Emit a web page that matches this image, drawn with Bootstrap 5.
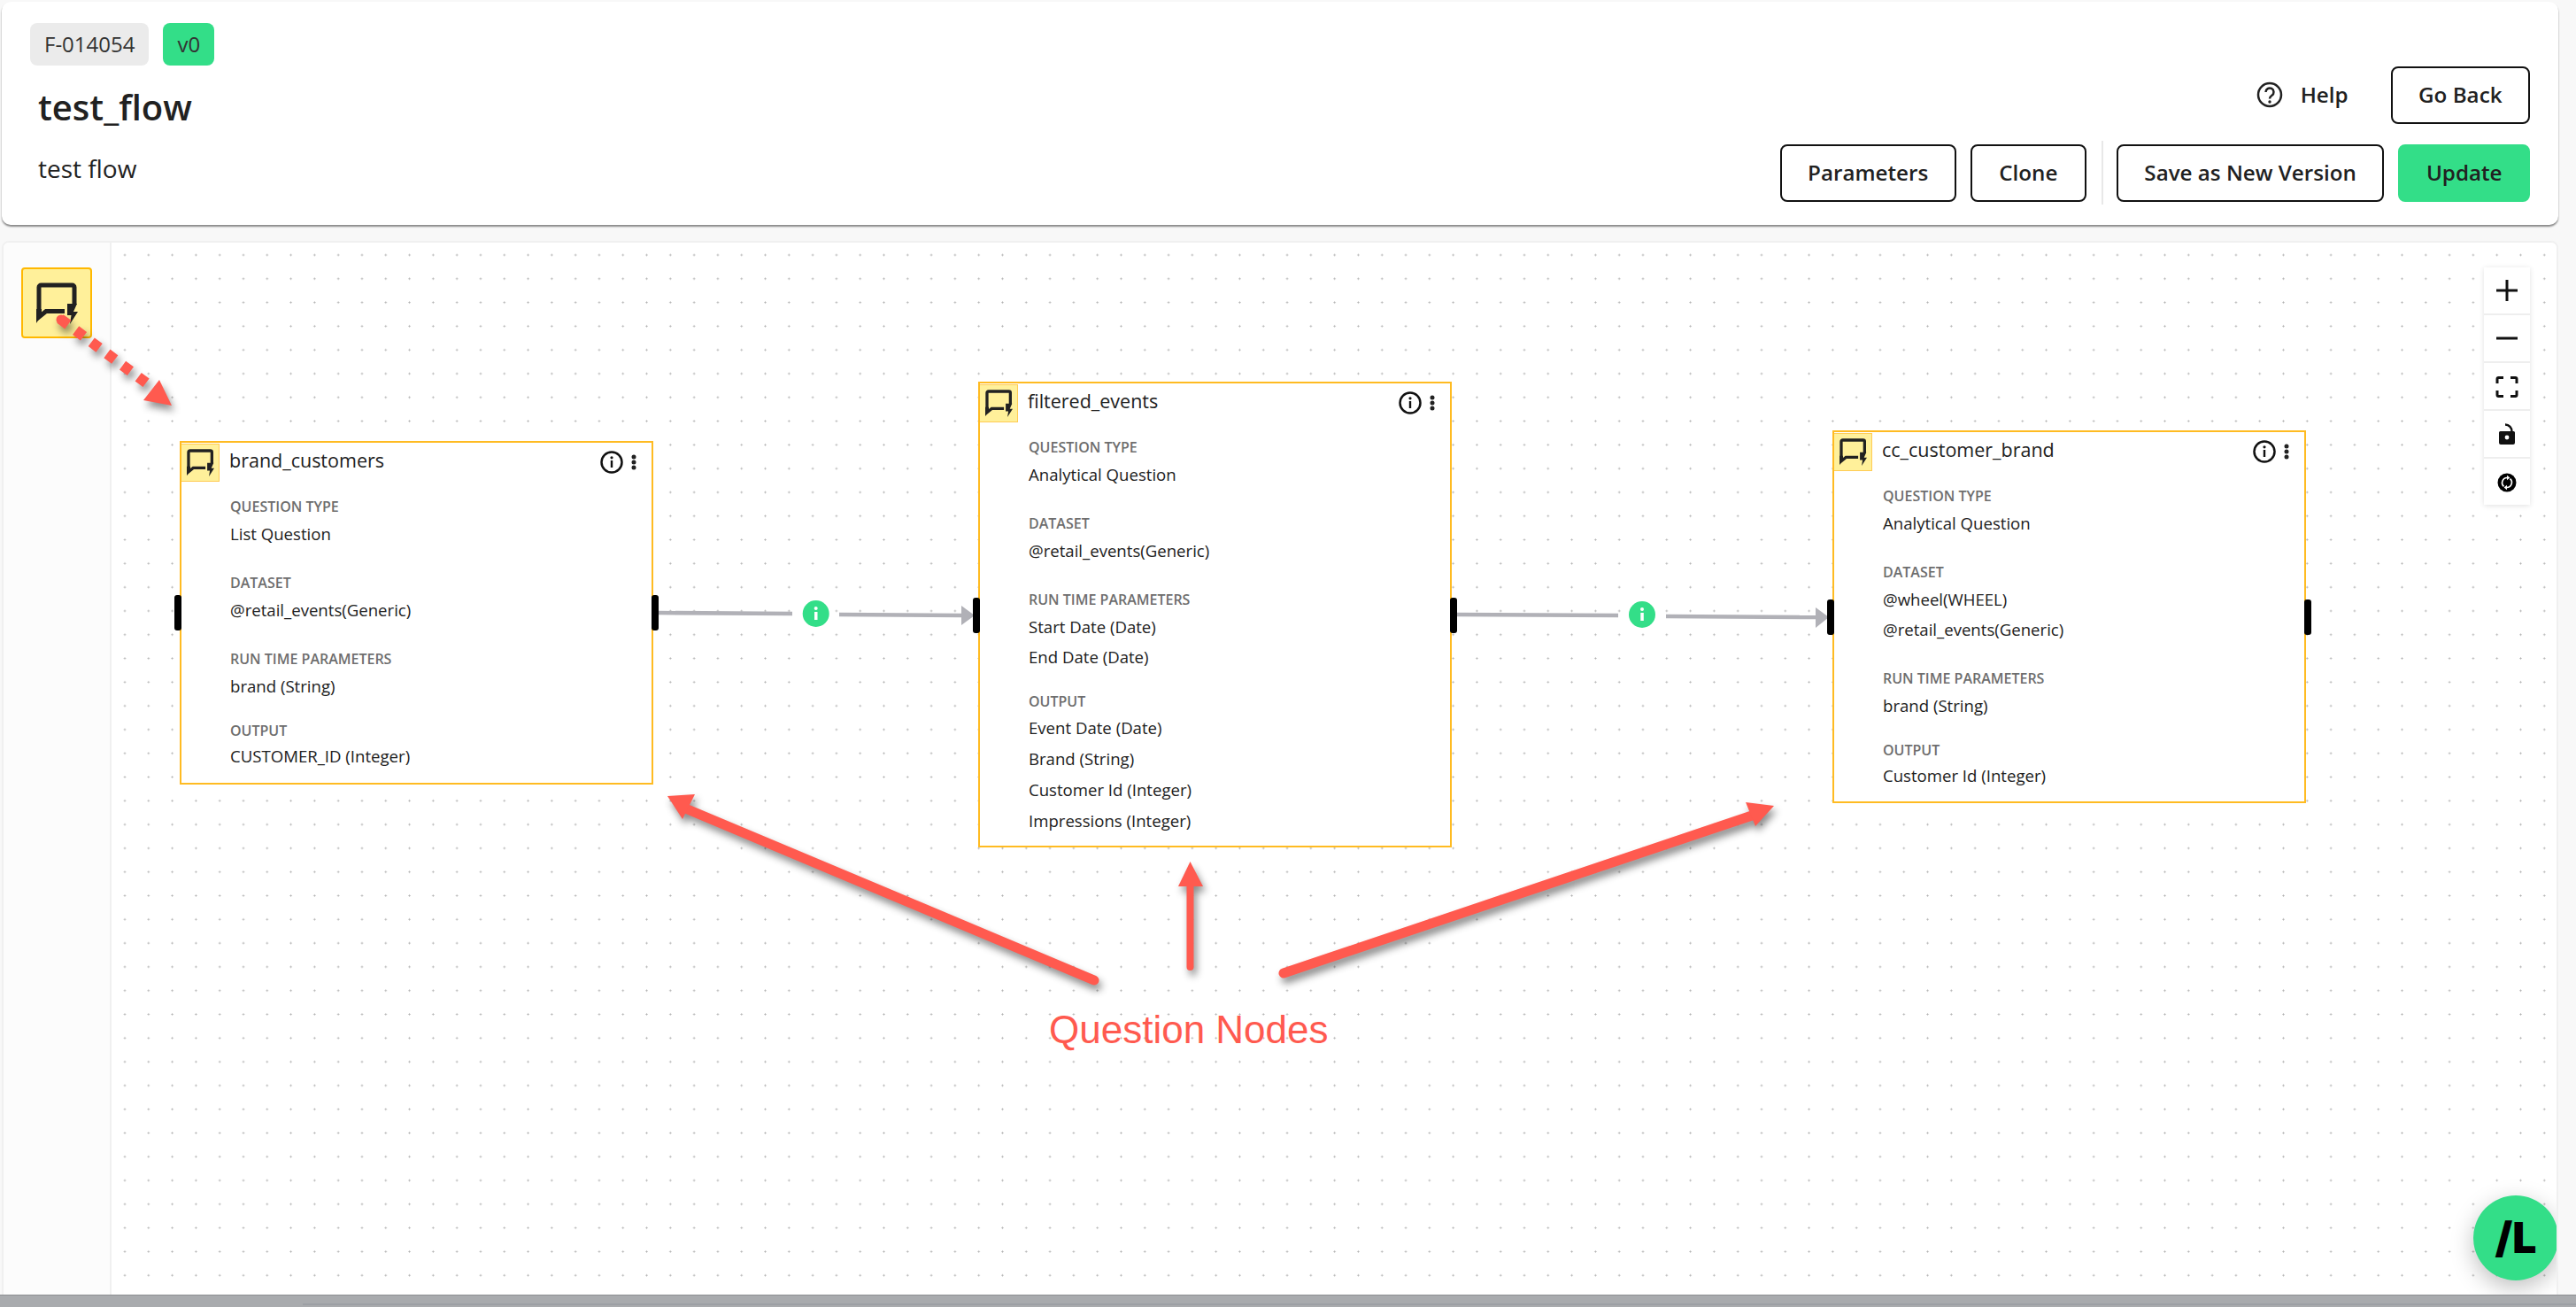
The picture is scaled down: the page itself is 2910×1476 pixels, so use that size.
<!DOCTYPE html>
<html lang="en">
<head>
<meta charset="utf-8">
<title>test_flow</title>
<link href="https://cdn.jsdelivr.net/npm/bootstrap@5.3.0/dist/css/bootstrap.min.css" rel="stylesheet">
<style>
html,body{height:100%;overflow:hidden}
body{background:#f8f8f8;font-family:"Open Sans","Noto Sans",sans-serif;color:#212121;position:relative}
.app-shell{height:1476px;padding:2px 20px 0 2px}
.head-card{height:252px;background:#fff;border-radius:10px;box-shadow:0 2px 2px rgba(0,0,0,.45);padding:24px 32px 0}
.tag{height:48px;line-height:48px;padding:0 16px;border-radius:8px;font-size:24px;background:#ebebeb;color:#333}
.tag-green{background:#33de88;padding:0 16px}
.flow-title{font-size:40px;font-weight:600;line-height:54px;margin:20px 0 0 9px}
.flow-desc{font-size:28px;line-height:38px;margin:23px 0 0 9px}
.head-actions{padding-top:49px}
.flow-btn{height:65px;padding:0 29.500px;border:2px solid #111;border-radius:8px;background:#fff;font-size:24.200px;font-weight:600;color:#212121;line-height:1}
.flow-btn-wide{padding:0 30.500px}
.flow-btn-green{background:#33de88;border-color:#33de88}
.help-link{font-size:24.200px;font-weight:600;margin-right:48px;gap:20px}
.act-row{margin-top:19px}
.act-divider{width:2px;height:72px;background:#e8e8e8;margin:0 15px 0 17px}
.canvas-panel{height:1190px;margin:18px 0 0 0;border:2px solid #f0f0f0;border-bottom:0;border-radius:8px 8px 0 0;overflow:hidden;background:#fff}
.side-rail{width:122px;flex:none;background:#fcfcfc;border-right:2px solid #f0f0f0;padding:28px 0 0 20px}
.rail-item{width:80px;height:80px;background:#fff09a;border:2px solid #ffb800;border-radius:4px}
.rail-item svg{width:47px;height:47px}
.flow-canvas{position:relative;flex:1;background-color:#fff;background-image:radial-gradient(circle,#b0b0b0 0,#b0b0b0 .8px,transparent 1.3px);background-size:26.8px 26.8px;background-position:1.6px .6px}
.edge-layer{position:absolute;left:0;top:0;width:2760px;height:1190px}
.q-node{position:absolute;width:535px;background:#fff;border:2px solid #ffbb22;padding-bottom:11px}
.n1{left:77px;top:224px;padding-bottom:13px}
.n2{left:979px;top:157px}
.n3{left:1944px;top:212px;padding-bottom:12px}
.n1 .node-port{top:172px}
.n2 .node-port{top:242px}
.n3 .node-port{top:189px}
.n2 .fld-sec:last-of-type .fld-val{line-height:35px}
.node-head{height:62px;padding-right:17px}
.node-ico{width:43px;height:43px;margin-top:1px;background:#fff09a;border:1.5px solid #ffcc55;border-left:0}
.node-ico svg{width:31px;height:31px}
.node-name{font-size:21.500px;line-height:40px;margin-left:11px}
.node-tools{margin-top:9px;gap:9px}
.node-body{padding-left:55px}
.fld-label{font-size:16px;font-weight:600;line-height:20px;color:#6e6e6e;margin-bottom:4px}
.fld-val{font-size:18.600px;line-height:34px}
.fld-sec{margin-bottom:28px}
.fld-sec-end{margin-bottom:23px}
.fld-sec:last-child{margin-bottom:0}
.fld-label-tight{margin-bottom:2px}
.node-port{position:absolute;width:8px;height:40px;background:#000;border-radius:3px}
.port-l{left:-8px}
.port-r{right:-8px}
.zoom-bar{position:absolute;left:2680px;top:28px;width:52px;box-shadow:0 1px 6px rgba(0,0,0,.12);background:#eee;gap:2px}
.zoom-btn{width:52px;height:52px;background:#fff;padding:0;border:0;border-radius:0}
.brand-fab{position:absolute;left:2668px;top:1076px;width:96px;height:96px;border-radius:50%;background:#33de88;box-shadow:0 8px 26px rgba(0,0,0,.25);color:#000;font-family:"Inter","Liberation Sans",sans-serif;font-weight:900;font-size:48px;line-height:96px;text-align:center}
.ann-layer{position:absolute;left:0;top:0;width:2910px;height:1476px;pointer-events:none;filter:drop-shadow(3px 6px 4px rgba(0,0,0,.45))}
.ann-text{position:absolute;left:1185px;top:1136px;font-family:"Liberation Sans",Arial,sans-serif;font-size:44px;line-height:54px;color:#ff5a4f;white-space:nowrap}
.os-strip{position:absolute;left:0;right:0;top:1462px;height:14px;background:#a9abae;border-top:1px solid #8d8f92}
.os-strip::after{content:"";position:absolute;left:342px;right:0;top:9px;height:2px;background:#9da0a5}
</style>
</head>
<body>
<svg width="0" height="0" class="position-absolute">
  <defs>
    <symbol id="q-ico" viewBox="0 0 47 47">
      <path d="M43 25V5.500a2.500 2.500 0 0 0-2.500-2.500H5.500A2.500 2.500 0 0 0 3 5.500V39l8-6.500h21" fill="none" stroke="#212121" stroke-width="5"/>
      <path d="M0 46V30h6v6z" fill="#212121"/>
      <path d="M35 24h11l-4 9h5l-9 14 1.500-10H35z" fill="#212121"/>
    </symbol>
    <symbol id="inf-ico" viewBox="0 0 26 26">
      <circle cx="13" cy="13" r="11.500" fill="none" stroke="#111" stroke-width="2.500"/>
      <rect x="11.800" y="11" width="2.400" height="8" fill="#111"/>
      <circle cx="13" cy="7.800" r="1.600" fill="#111"/>
    </symbol>
    <symbol id="keb-ico" viewBox="0 0 6 18">
      <circle cx="3" cy="3" r="2.500" fill="#222"/><circle cx="3" cy="9" r="2.500" fill="#222"/><circle cx="3" cy="15" r="2.500" fill="#222"/>
    </symbol>
  </defs>
</svg>

<div class="app-shell d-flex flex-column">
  <header class="head-card d-flex justify-content-between">
    <div>
      <div class="d-flex gap-3">
        <span class="tag">F-014054</span>
        <span class="tag tag-green">v0</span>
      </div>
      <h1 class="flow-title">test_flow</h1>
      <p class="flow-desc">test flow</p>
    </div>
    <div class="head-actions d-flex flex-column align-items-end">
      <div class="d-flex align-items-center">
        <span class="help-link d-flex align-items-center">
          <svg width="30" height="30" viewBox="0 0 30 30"><circle cx="15" cy="15" r="13" fill="none" stroke="#212121" stroke-width="2.500"/><path d="M10.500 12a4.500 4.500 0 1 1 7 3.700c-1.600 1.100-2.500 1.900-2.500 3.800" fill="none" stroke="#212121" stroke-width="2.500"/><circle cx="15" cy="23" r="1.700" fill="#212121"/></svg>
          Help
        </span>
        <button class="btn flow-btn">Go Back</button>
      </div>
      <div class="d-flex align-items-center act-row">
        <button class="btn flow-btn">Parameters</button>
        <button class="btn flow-btn flow-btn-wide ms-3">Clone</button>
        <span class="act-divider"></span>
        <button class="btn flow-btn">Save as New Version</button>
        <button class="btn flow-btn flow-btn-green ms-3">Update</button>
      </div>
    </div>
  </header>

  <section class="canvas-panel d-flex">
    <aside class="side-rail">
      <div class="rail-item d-flex align-items-center justify-content-center"><svg><use href="#q-ico"/></svg></div>
    </aside>
    <div class="flow-canvas">
      <svg class="edge-layer" viewBox="126 274 2760 1190">
        <g fill="none" stroke="#b1b1b7" stroke-width="4.500">
          <path d="M743 692L895 693"/><path d="M948 694L1087 695"/>
          <path d="M1644 694L1828 695"/><path d="M1882 696L2052 697"/>
        </g>
        <path d="M1086 684L1101 695L1086 706z" fill="#b1b1b7"/>
        <path d="M2051 686L2066 697L2051 709z" fill="#b1b1b7"/>
        <g>
          <circle cx="921.700" cy="693" r="15" fill="#33de88"/><rect x="920" y="691" width="3.500" height="9" fill="#fff"/><circle cx="921.700" cy="687" r="2" fill="#fff"/>
          <circle cx="1855" cy="694" r="15" fill="#33de88"/><rect x="1853.300" y="692" width="3.500" height="9" fill="#fff"/><circle cx="1855" cy="688" r="2" fill="#fff"/>
        </g>
      </svg>

      <article class="q-node n1">
        <div class="node-head d-flex align-items-start">
          <span class="node-ico d-flex align-items-center justify-content-center"><svg><use href="#q-ico"/></svg></span>
          <span class="node-name">brand_customers</span>
          <span class="node-tools ms-auto d-flex align-items-center"><svg width="26" height="26"><use href="#inf-ico"/></svg><svg width="6" height="18"><use href="#keb-ico"/></svg></span>
        </div>
        <div class="node-body">
          <div class="fld-sec"><div class="fld-label">QUESTION TYPE</div><div class="fld-val">List Question</div></div>
          <div class="fld-sec"><div class="fld-label">DATASET</div><div class="fld-val">@retail_events(Generic)</div></div>
          <div class="fld-sec fld-sec-end"><div class="fld-label">RUN TIME PARAMETERS</div><div class="fld-val">brand (String)</div></div>
          <div class="fld-sec"><div class="fld-label fld-label-tight">OUTPUT</div><div class="fld-val">CUSTOMER_ID (Integer)</div></div>
        </div>
        <span class="node-port port-l"></span><span class="node-port port-r"></span>
      </article>

      <article class="q-node n2">
        <div class="node-head d-flex align-items-start">
          <span class="node-ico d-flex align-items-center justify-content-center"><svg><use href="#q-ico"/></svg></span>
          <span class="node-name">filtered_events</span>
          <span class="node-tools ms-auto d-flex align-items-center"><svg width="26" height="26"><use href="#inf-ico"/></svg><svg width="6" height="18"><use href="#keb-ico"/></svg></span>
        </div>
        <div class="node-body">
          <div class="fld-sec"><div class="fld-label">QUESTION TYPE</div><div class="fld-val">Analytical Question</div></div>
          <div class="fld-sec"><div class="fld-label">DATASET</div><div class="fld-val">@retail_events(Generic)</div></div>
          <div class="fld-sec fld-sec-end"><div class="fld-label">RUN TIME PARAMETERS</div><div class="fld-val">Start Date (Date)</div><div class="fld-val">End Date (Date)</div></div>
          <div class="fld-sec"><div class="fld-label fld-label-tight">OUTPUT</div><div class="fld-val">Event Date (Date)</div><div class="fld-val">Brand (String)</div><div class="fld-val">Customer Id (Integer)</div><div class="fld-val">Impressions (Integer)</div></div>
        </div>
        <span class="node-port port-l"></span><span class="node-port port-r"></span>
      </article>

      <article class="q-node n3">
        <div class="node-head d-flex align-items-start">
          <span class="node-ico d-flex align-items-center justify-content-center"><svg><use href="#q-ico"/></svg></span>
          <span class="node-name">cc_customer_brand</span>
          <span class="node-tools ms-auto d-flex align-items-center"><svg width="26" height="26"><use href="#inf-ico"/></svg><svg width="6" height="18"><use href="#keb-ico"/></svg></span>
        </div>
        <div class="node-body">
          <div class="fld-sec"><div class="fld-label">QUESTION TYPE</div><div class="fld-val">Analytical Question</div></div>
          <div class="fld-sec"><div class="fld-label">DATASET</div><div class="fld-val">@wheel(WHEEL)</div><div class="fld-val">@retail_events(Generic)</div></div>
          <div class="fld-sec fld-sec-end"><div class="fld-label">RUN TIME PARAMETERS</div><div class="fld-val">brand (String)</div></div>
          <div class="fld-sec"><div class="fld-label fld-label-tight">OUTPUT</div><div class="fld-val">Customer Id (Integer)</div></div>
        </div>
        <span class="node-port port-l"></span><span class="node-port port-r"></span>
      </article>

      <div class="zoom-bar d-flex flex-column">
        <button class="btn zoom-btn" aria-label="Zoom in"><svg width="26" height="26" viewBox="0 0 26 26"><path d="M1 13h24M13 1v24" stroke="#111" stroke-width="3"/></svg></button>
        <button class="btn zoom-btn" aria-label="Zoom out"><svg width="26" height="26" viewBox="0 0 26 26"><path d="M1 13h24" stroke="#111" stroke-width="3"/></svg></button>
        <button class="btn zoom-btn" aria-label="Fit view"><svg width="26" height="24" viewBox="0 0 26 24"><path d="M2 8V3a1.500 1.500 0 0 1 1.500-1.500H9M17 1.500h5.500A1.500 1.500 0 0 1 24 3v5M24 16v5a1.500 1.500 0 0 1-1.500 1.500H17M9 22.500H3.500A1.500 1.500 0 0 1 2 21v-5" fill="none" stroke="#111" stroke-width="3"/></svg></button>
        <button class="btn zoom-btn" aria-label="Lock"><svg width="20" height="25" viewBox="0 0 20 25"><path d="M8 1.500a7.500 7.500 0 0 1 7.500 8" fill="none" stroke="#111" stroke-width="2.400"/><path d="M2.500 9h15A1.500 1.500 0 0 1 19 10.500V22a2 2 0 0 1-2 2H3a2 2 0 0 1-2-2V10.500A1.500 1.500 0 0 1 2.500 9z" fill="#111"/><circle cx="10" cy="16" r="2.400" fill="#fff"/></svg></button>
        <button class="btn zoom-btn" aria-label="Sync"><svg width="22" height="22" viewBox="0 0 22 22"><circle cx="11" cy="11" r="10.500" fill="#000"/><path d="M11.500 5.500A5.600 5.600 0 0 0 7.500 15.300M10.500 16.500A5.600 5.600 0 0 0 14.500 6.700" fill="none" stroke="#fff" stroke-width="1.700"/><path d="M11 2.800v5.400l3.400-2.700zM11 19.200v-5.400l-3.400 2.700z" fill="#fff"/></svg></button>
      </div>

      <div class="brand-fab">/L</div>
    </div>
  </section>
</div>

<div class="os-strip"></div>

<svg class="ann-layer" viewBox="0 0 2910 1476">
  <path d="M68 360L170 436" fill="none" stroke="#ff5a4f" stroke-width="12" stroke-dasharray="11 11" stroke-linecap="butt"/>
  <circle cx="69" cy="361" r="5.500" fill="#ff5a4f"/>
  <path d="M180 429L194 458L162 452z" fill="#ff5a4f"/>
  <path d="M1236 1107L772 912" fill="none" stroke="#ff5a4f" stroke-width="11" stroke-linecap="round"/>
  <path d="M754 899L785 897L771 925z" fill="#ff5a4f"/>
  <path d="M1344.500 1092V998" fill="none" stroke="#ff5a4f" stroke-width="8" stroke-linecap="round"/>
  <path d="M1344.500 973L1359 1001H1331z" fill="#ff5a4f"/>
  <path d="M1450 1099L1985 919" fill="none" stroke="#ff5a4f" stroke-width="11" stroke-linecap="round"/>
  <path d="M2004 910L1972 906L1983 933z" fill="#ff5a4f"/>
</svg>
<div class="ann-text">Question Nodes</div>

<script src="https://cdn.jsdelivr.net/npm/bootstrap@5.3.0/dist/js/bootstrap.bundle.min.js"></script>
</body>
</html>
